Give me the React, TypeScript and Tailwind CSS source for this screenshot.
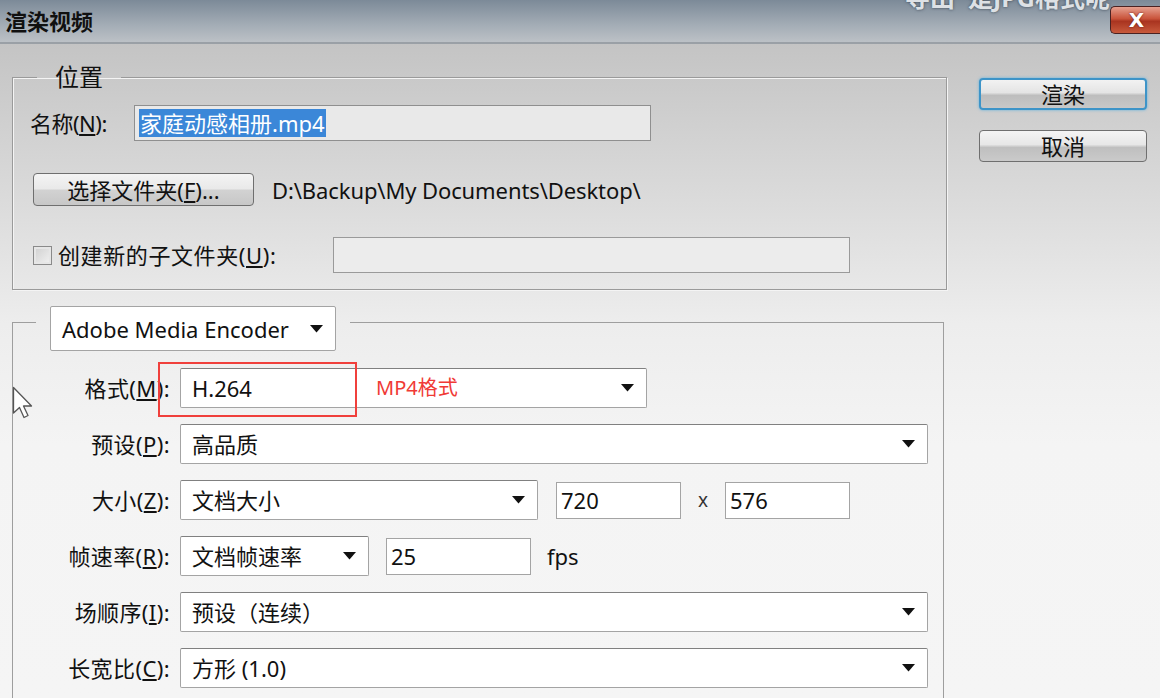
import React from "react";

const Arrow = () => (
  <svg width="13" height="8" viewBox="0 0 13 8" className="shrink-0">
    <polygon points="0,0 13,0 6.5,7.5" fill="#111" />
  </svg>
);

function Select({ text, w }: { text: string; w: string }) {
  return (
    <div
      className={`${w} h-[40px] bg-white border border-[#a4a4a4] border-t-[#808080] rounded-[2px] flex items-center justify-between pl-[11px] pr-[12px] text-[22px] text-[#111]`}
    >
      <span>{text}</span>
      <Arrow />
    </div>
  );
}

function Label({ children }: { children: React.ReactNode }) {
  return (
    <div className="w-[157px] mr-[10px] text-right text-[22px] text-[#111] whitespace-nowrap tracking-[0.4px]">{children}</div>
  );
}

export default function App() {
  return (
    <div className="w-[1160px] h-[698px] overflow-hidden relative font-['Noto_Sans','Noto_Sans_CJK_SC',sans-serif] text-[#111] leading-none">
      {/* Title bar */}
      <div className="h-[44px] flex items-start justify-between bg-[linear-gradient(to_bottom,#7c8a98,#a4adb6_60%,#bcc1c6)] border-b-2 border-[#9aa0a6] relative">
        <span className="pl-[5px] pt-[10px] text-[22px] font-bold text-[#101010]">渲染视频</span>
        <div className="absolute left-[905px] top-[-15px] text-[25px] font-bold text-[#dde1e5] [text-shadow:0_0_3px_#3a4450] whitespace-nowrap">
          导出&nbsp;&nbsp;是JPG格式呢
        </div>
        <div className="mt-[6px] w-[50px] h-[28px] rounded-l-[5px] border border-[#4a2222] border-r-0 bg-[linear-gradient(to_bottom,#e6a08f,#c9533a_45%,#a93420_55%,#c85a3c)] flex items-center justify-center pl-[2px]">
          <span className="text-white font-bold text-[20px] font-['DejaVu_Sans',sans-serif] [text-shadow:0_0_2px_#511]">X</span>
        </div>
      </div>

      {/* Body */}
      <div className="h-[654px] flex bg-[linear-gradient(to_bottom,#c4c4c4_0px,#dadada_150px,#ededed_280px,#f4f4f4_400px,#f5f5f5_100%)]">
        {/* Left column */}
        <div className="w-[947px] pl-[12px] flex flex-col">
          {/* Location group */}
          <fieldset className="mt-[16px] w-[935px] border border-[#9a9a9a] pl-[17px] pt-[11px] pb-[16px] [box-shadow:inset_1px_1px_0_#f4f4f4,1px_1px_0_#f4f4f4]">
            <legend className="ml-[7px] px-[18px] text-[24px] leading-[34px]">位置</legend>
            <div className="flex items-center h-[36px]">
              <div className="w-[104px] text-[22px] tracking-[-0.5px]">
                名称(<u>N</u>):
              </div>
              <div className="w-[517px] h-[36px] border border-[#8f8f8f] bg-[#e9e9e9] flex items-center pl-[4px]">
                <span className="bg-[#3b87d8] text-white text-[22px] px-[1px] py-[3px]">家庭动感相册.mp4</span>
              </div>
            </div>
            <div className="flex items-center h-[33px] mt-[32px]">
              <div className="ml-[3px] w-[221px] h-[33px] rounded-[4px] border border-[#6f6f6f] bg-[linear-gradient(to_bottom,#f4f4f4,#e9e9e9_48%,#d2d2d2_52%,#c7c7c7)] flex items-center justify-center text-[22px]">
                选择文件夹(<u>F</u>)...
              </div>
              <span className="ml-[18px] text-[22px] tracking-[-0.1px]">D:\Backup\My Documents\Desktop\</span>
            </div>
            <div className="flex items-center h-[36px] mt-[31px]">
              <div className="ml-[3px] w-[19px] h-[19px] border border-[#8a8a8a] bg-[linear-gradient(135deg,#cfcfcf,#f2f2f2)] [box-shadow:inset_0_0_0_2px_#e6e6e6]" />
              <div className="ml-[6px] w-[275px] text-[22px] tracking-[0.6px]">
                创建新的子文件夹(<u>U</u>):
              </div>
              <div className="w-[517px] h-[36px] border border-[#9a9a9a] bg-[#ececec]" />
            </div>
          </fieldset>

          {/* Encoder group */}
          <fieldset className="mt-[16px] w-[932px] border border-[#9e9e9e] pb-[30px] pt-[30px]">
            <legend className="ml-[23px] px-[14px] bg-transparent">
              <div className="w-[286px] h-[45px] mb-[-13px] bg-white border border-[#a4a4a4] rounded-[2px] flex items-center justify-between pl-[11px] pr-[12px] text-[22px]">
                <span>Adobe Media Encoder</span>
                <Arrow />
              </div>
            </legend>

            <div className="flex flex-col gap-[16px]">
              <div className="relative flex items-center">
                <Label>
                  格式(<u>M</u>):
                </Label>
                <div className="w-[467px] h-[40px] bg-white border border-[#a4a4a4] border-t-[#808080] rounded-[2px] flex items-center justify-between pl-[11px] pr-[12px] text-[22px]">
                  <span>H.264</span>
                  <Arrow />
                </div>
                <div className="absolute left-[145px] top-[-6px] w-[199px] h-[55px] border-2 border-[#f0403c]" />
                <div className="absolute left-[363px] top-[10px] text-[20px] text-[#f03a36]">MP4格式</div>
              </div>

              <div className="flex items-center">
                <Label>
                  预设(<u>P</u>):
                </Label>
                <Select text="高品质" w="w-[748px]" />
              </div>

              <div className="flex items-center">
                <Label>
                  大小(<u>Z</u>):
                </Label>
                <Select text="文档大小" w="w-[358px]" />
                <div className="ml-[18px] w-[125px] h-[37px] bg-white border border-[#a4a4a4] flex items-center pl-[4px] text-[22px]">720</div>
                <span className="w-[44px] text-center text-[19px] text-[#333]">x</span>
                <div className="w-[125px] h-[37px] bg-white border border-[#a4a4a4] flex items-center pl-[4px] text-[22px]">576</div>
              </div>

              <div className="flex items-center">
                <Label>
                  帧速率(<u>R</u>):
                </Label>
                <Select text="文档帧速率" w="w-[189px]" />
                <div className="ml-[17px] w-[145px] h-[37px] bg-white border border-[#a4a4a4] flex items-center pl-[4px] text-[22px]">25</div>
                <span className="ml-[16px] text-[22px]">fps</span>
              </div>

              <div className="flex items-center">
                <Label>
                  场顺序(<u>I</u>):
                </Label>
                <Select text="预设（连续）" w="w-[748px]" />
              </div>

              <div className="flex items-center">
                <Label>
                  长宽比(<u>C</u>):
                </Label>
                <Select text="方形 (1.0)" w="w-[748px]" />
              </div>
            </div>
          </fieldset>
        </div>

        {/* Right column */}
        <div className="ml-[32px] pt-[34px] flex flex-col gap-[20px]">
          <div className="w-[168px] h-[32px] rounded-[4px] border-2 border-[#3d94c8] [box-shadow:0_0_3px_#5fb3e0] bg-[linear-gradient(to_bottom,#f2f2f2,#e4e4e4_45%,#bdbdbd_55%,#c8c8c8)] flex items-center justify-center text-[22px]">
            渲染
          </div>
          <div className="w-[168px] h-[32px] rounded-[4px] border border-[#6f6f6f] bg-[linear-gradient(to_bottom,#f4f4f4,#e7e7e7_45%,#bfbfbf_55%,#cacaca)] flex items-center justify-center text-[22px]">
            取消
          </div>
        </div>
      </div>

      {/* Mouse cursor */}
      <svg className="absolute left-[12px] top-[386px]" width="24" height="36" viewBox="0 0 24 36">
        <path d="M1.5 1.5 L1.5 27 L7.5 21.5 L12 31.5 L16 29.5 L11.5 20 L19.5 20 Z" fill="#fff" stroke="#555" strokeWidth="1.3" strokeLinejoin="round" />
      </svg>
    </div>
  );
}
